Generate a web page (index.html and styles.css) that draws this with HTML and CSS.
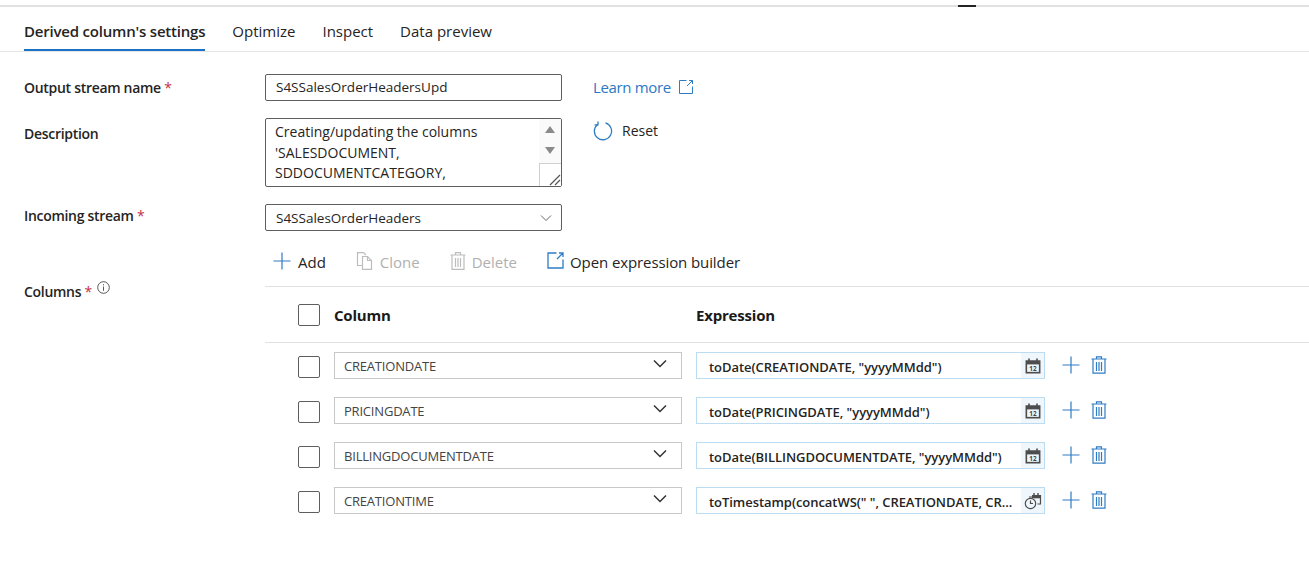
FILE: index.html
```html
<!DOCTYPE html>
<html lang="en">

<head>
    <meta charset="UTF-8">
    <meta name="viewport" content="width=device-width, initial-scale=1.0">
    <title>Derived column's settings</title>
    <link rel="stylesheet" href="styles.css">
</head>

<body>
    <div class="top-line"><span class="top-mark"></span></div>

    <div class="tabs">
        <span class="tab active">Derived column's settings</span>
        <span class="tab">Optimize</span>
        <span class="tab">Inspect</span>
        <span class="tab">Data preview</span>
    </div>

    <div class="form">
        <div class="field-row row-output">
            <label class="field-label">Output stream name <span class="req">*</span></label>
            <div class="text-box">S4SSalesOrderHeadersUpd</div>
            <a class="side-link">Learn more
                <svg class="ext-icon" width="16" height="16" viewBox="0 0 16 16" fill="none" stroke="#2f7cc4" stroke-width="1"><path d="M8.5 1.5H1.5V14.5H14.5V7.5"/><path d="M11 1.5H14.5V5M14.5 1.5L9 7"/></svg>
            </a>
        </div>

        <div class="field-row row-desc">
            <label class="field-label">Description</label>
            <div class="desc-box">
                <div class="desc-text">Creating/updating the columns<br>'SALESDOCUMENT,<br>SDDOCUMENTCATEGORY,</div>
                <div class="desc-scroll">
                    <span class="arrow-up"></span>
                    <span class="arrow-down"></span>
                    <span class="grip">
                        <svg width="12" height="12" viewBox="0 0 12 12" fill="none" stroke="#555" stroke-width="1.2"><path d="M1 11L11 1M6 11L11 6"/></svg>
                    </span>
                </div>
            </div>
            <div class="side-link reset">
                <svg width="20" height="20" viewBox="0 0 20 20" fill="none" stroke="#2f7cc4" stroke-width="1.3"><path d="M12.5 1.9A8.6 8.6 0 1 1 4.6 3.4"/><path d="M5 0.6V3.8H1.6"/></svg>
                <span>Reset</span>
            </div>
        </div>

        <div class="field-row row-incoming">
            <label class="field-label">Incoming stream <span class="req">*</span></label>
            <div class="text-box select-box">
                <span>S4SSalesOrderHeaders</span>
                <svg width="12" height="12" viewBox="0 0 12 12" fill="none" stroke="#666" stroke-width="1"><path d="M1 3.5L6 8.5L11 3.5"/></svg>
            </div>
        </div>

        <div class="columns-section">
            <label class="field-label columns-label">Columns <span class="req">*</span>
                <svg class="info-icon" width="13" height="13" viewBox="0 0 13 13" fill="none" stroke="#444" stroke-width="0.9"><circle cx="6.5" cy="6.5" r="5.8"/><path d="M6.5 5.6V9.8M6.5 3.2V4.4"/></svg>
            </label>

            <div class="columns-body">
                <div class="toolbar">
                    <span class="tool tool-add">
                        <svg width="18" height="18" viewBox="0 0 18 18" stroke="#2f7cc4" stroke-width="1.2"><path d="M9 0.5V17.5M0.5 9H17.5"/></svg>
                        Add
                    </span>
                    <span class="tool tool-clone disabled">
                        <svg width="17" height="18" viewBox="0 0 17 18" fill="none" stroke="#bdbdbd" stroke-width="1.2"><path d="M6.5 4.5H11.5L15.5 8.5V17.4H6.5Z"/><path d="M11.5 4.5V8.5H15.5"/><path d="M6.5 13.5H1.5V0.6H7.5L10 3"/></svg>
                        Clone
                    </span>
                    <span class="tool tool-delete disabled">
                        <svg width="16" height="18" viewBox="0 0 16 18" fill="none" stroke="#bdbdbd" stroke-width="1.2"><path d="M0.5 3H15.5M5.5 3V0.6H10.5V3M2 3V17.4H14V3M5.5 6V15M8 6V15M10.5 6V15"/></svg>
                        Delete
                    </span>
                    <span class="tool open-builder">
                        <svg width="17" height="17" viewBox="0 0 17 17" fill="none" stroke="#2f7cc4" stroke-width="1.3"><path d="M9.5 1H1V16H16V7.5"/><path d="M12 1H16V5M16 1L10 7"/></svg>
                        Open expression builder
                    </span>
                </div>

                <div class="table-head">
                    <span class="check"></span>
                    <span class="col-name">Column</span>
                    <span class="col-expr">Expression</span>
                </div>

                <div class="table-body">
                    <div class="table-row">
                        <span class="check"></span>
                        <div class="col-select"><span>CREATIONDATE</span><svg class="chevron" width="14" height="9" viewBox="0 0 14 9" fill="none" stroke="#333" stroke-width="1.5"><path d="M1 1.5L7 7.5L13 1.5"/></svg></div>
                        <div class="expr-box">
                            <span class="expr-text">toDate(CREATIONDATE, "yyyyMMdd")</span>
                            <span class="expr-icon"><svg class="cal" width="16" height="16" viewBox="0 0 15 15"><path fill="#4d4d4d" d="M0.5 2H3V0.5H4.5V2H10.5V0.5H12V2H14.5V14.5H0.5Z"/><rect x="2" y="6" width="11" height="7" fill="#eef5fb"/><text x="7.5" y="12" class="cal-num">12</text></svg></span>
                        </div>
                        <span class="row-actions">
                            <svg width="18" height="18" viewBox="0 0 18 18" stroke="#2f7cc4" stroke-width="1.2"><path d="M9 0.5V17.5M0.5 9H17.5"/></svg>
                            <svg width="16" height="18" viewBox="0 0 16 18" fill="none" stroke="#2f7cc4" stroke-width="1.2"><path d="M0.5 3H15.5M5.5 3V0.8H10.5V3M2 3V17.2H14V3M5.5 6V15M8 6V15M10.5 6V15"/></svg>
                        </span>
                    </div>
                    <div class="table-row">
                        <span class="check"></span>
                        <div class="col-select"><span>PRICINGDATE</span><svg class="chevron" width="14" height="9" viewBox="0 0 14 9" fill="none" stroke="#333" stroke-width="1.5"><path d="M1 1.5L7 7.5L13 1.5"/></svg></div>
                        <div class="expr-box">
                            <span class="expr-text">toDate(PRICINGDATE, "yyyyMMdd")</span>
                            <span class="expr-icon"><svg class="cal" width="16" height="16" viewBox="0 0 15 15"><path fill="#4d4d4d" d="M0.5 2H3V0.5H4.5V2H10.5V0.5H12V2H14.5V14.5H0.5Z"/><rect x="2" y="6" width="11" height="7" fill="#eef5fb"/><text x="7.5" y="12" class="cal-num">12</text></svg></span>
                        </div>
                        <span class="row-actions">
                            <svg width="18" height="18" viewBox="0 0 18 18" stroke="#2f7cc4" stroke-width="1.2"><path d="M9 0.5V17.5M0.5 9H17.5"/></svg>
                            <svg width="16" height="18" viewBox="0 0 16 18" fill="none" stroke="#2f7cc4" stroke-width="1.2"><path d="M0.5 3H15.5M5.5 3V0.8H10.5V3M2 3V17.2H14V3M5.5 6V15M8 6V15M10.5 6V15"/></svg>
                        </span>
                    </div>
                    <div class="table-row">
                        <span class="check"></span>
                        <div class="col-select"><span>BILLINGDOCUMENTDATE</span><svg class="chevron" width="14" height="9" viewBox="0 0 14 9" fill="none" stroke="#333" stroke-width="1.5"><path d="M1 1.5L7 7.5L13 1.5"/></svg></div>
                        <div class="expr-box">
                            <span class="expr-text">toDate(BILLINGDOCUMENTDATE, "yyyyMMdd")</span>
                            <span class="expr-icon"><svg class="cal" width="16" height="16" viewBox="0 0 15 15"><path fill="#4d4d4d" d="M0.5 2H3V0.5H4.5V2H10.5V0.5H12V2H14.5V14.5H0.5Z"/><rect x="2" y="6" width="11" height="7" fill="#eef5fb"/><text x="7.5" y="12" class="cal-num">12</text></svg></span>
                        </div>
                        <span class="row-actions">
                            <svg width="18" height="18" viewBox="0 0 18 18" stroke="#2f7cc4" stroke-width="1.2"><path d="M9 0.5V17.5M0.5 9H17.5"/></svg>
                            <svg width="16" height="18" viewBox="0 0 16 18" fill="none" stroke="#2f7cc4" stroke-width="1.2"><path d="M0.5 3H15.5M5.5 3V0.8H10.5V3M2 3V17.2H14V3M5.5 6V15M8 6V15M10.5 6V15"/></svg>
                        </span>
                    </div>
                    <div class="table-row">
                        <span class="check"></span>
                        <div class="col-select"><span>CREATIONTIME</span><svg class="chevron" width="14" height="9" viewBox="0 0 14 9" fill="none" stroke="#333" stroke-width="1.5"><path d="M1 1.5L7 7.5L13 1.5"/></svg></div>
                        <div class="expr-box">
                            <span class="expr-text">toTimestamp(concatWS(" ", CREATIONDATE, CR...</span>
                            <span class="expr-icon"><svg width="18" height="18" viewBox="0 0 18 18" fill="none" stroke="#4d4d4d" stroke-width="1.2"><path d="M8 3.5H16.5V12H13.5"/><path d="M8 5H16.5" stroke-width="2.6"/><path d="M10 1V3.5M14 1V3.5" stroke-width="1.4"/><circle cx="6.5" cy="11.5" r="5.2"/><path d="M6.5 8.5V11.5H9M5 5H8"/></svg></span>
                        </div>
                        <span class="row-actions">
                            <svg width="18" height="18" viewBox="0 0 18 18" stroke="#2f7cc4" stroke-width="1.2"><path d="M9 0.5V17.5M0.5 9H17.5"/></svg>
                            <svg width="16" height="18" viewBox="0 0 16 18" fill="none" stroke="#2f7cc4" stroke-width="1.2"><path d="M0.5 3H15.5M5.5 3V0.8H10.5V3M2 3V17.2H14V3M5.5 6V15M8 6V15M10.5 6V15"/></svg>
                        </span>
                    </div>
                </div>
            </div>
        </div>
    </div>
</body>

</html>
```

FILE: styles.css
```css
body {
    font-family: "Open Sans", "Noto Sans", sans-serif;
    font-size: 14px;
    color: #252423;
    background-color: #fff;
    margin: 0;
    overflow: hidden;
}

.top-line {
    position: relative;
    height: 2px;
    margin-top: 5px;
    background-color: #e1e1e1;
}

.top-mark {
    position: absolute;
    left: 958px;
    top: 0;
    width: 18px;
    height: 2px;
    background-color: #252423;
}

.tabs {
    display: flex;
    gap: 27px;
    height: 44px;
    padding-left: 24px;
    border-bottom: 1px solid #e6e6e6;
}

.tab {
    font-size: 15px;
    line-height: 48px;
    height: 42px;
    white-space: nowrap;
}

.tab.active {
    font-weight: 600;
    letter-spacing: -0.2px;
    border-bottom: 2px solid #1a73c7;
}

.form {
    padding-left: 24px;
}

.field-row {
    display: flex;
    align-items: flex-start;
}

.field-label {
    flex: 0 0 241px;
    font-weight: 600;
    font-size: 14px;
    letter-spacing: -0.3px;
    white-space: nowrap;
}

.req {
    color: #c4314b;
    font-weight: 400;
}

.row-output {
    margin-top: 22px;
}

.row-output .field-label {
    line-height: 27px;
}

.row-desc {
    margin-top: 17px;
}

.row-desc .field-label {
    line-height: 32px;
}

.row-incoming {
    margin-top: 17px;
}

.row-incoming .field-label {
    line-height: 24px;
}

.text-box {
    width: 297px;
    height: 27px;
    line-height: 24px;
    padding: 0 10px;
    box-sizing: border-box;
    border: 1px solid #605e5c;
    border-radius: 2px;
    font-size: 13.5px;
}

.select-box {
    display: flex;
    align-items: center;
    justify-content: space-between;
    padding-right: 9px;
}

.side-link {
    display: flex;
    align-items: center;
    gap: 7px;
    margin-left: 31px;
    height: 26px;
    color: #2b78c5;
    font-size: 15px;
    letter-spacing: -0.35px;
}

.reset {
    color: #252423;
    height: 25px;
    gap: 9px;
    margin-left: 31px;
    font-size: 14px;
    letter-spacing: 0;
}

.desc-box {
    display: flex;
    width: 297px;
    height: 69px;
    box-sizing: border-box;
    border: 1px solid #605e5c;
    border-radius: 2px;
    overflow: hidden;
}

.desc-text {
    flex: 1;
    padding: 3px 0 0 9px;
    font-size: 14px;
    line-height: 20.5px;
    white-space: nowrap;
}

.desc-scroll {
    display: flex;
    flex-direction: column;
    align-items: center;
    width: 22px;
    background-color: #fafafa;
}

.arrow-up,
.arrow-down {
    width: 0;
    height: 0;
    border-left: 5px solid transparent;
    border-right: 5px solid transparent;
}

.arrow-up {
    margin-top: 7px;
    border-bottom: 7px solid #8a8a8a;
}

.arrow-down {
    margin-top: 14px;
    border-top: 7px solid #8a8a8a;
}

.grip {
    display: flex;
    align-items: flex-end;
    justify-content: flex-end;
    width: 22px;
    height: 23px;
    margin-top: 9px;
    border-top: 1px solid #d0d0d0;
    border-left: 1px solid #d0d0d0;
    box-sizing: border-box;
    background-color: #fff;
}

.columns-section {
    display: flex;
    align-items: flex-start;
}

.columns-label {
    padding-top: 51px;
    line-height: 20px;
}

.info-icon {
    position: relative;
    top: -3px;
    margin-left: 2px;
}

.columns-body {
    flex: 1;
}

.toolbar {
    display: flex;
    align-items: center;
    height: 48px;
    padding: 7px 0 0 8px;
    border-bottom: 1px solid #e1e1e1;
    font-size: 15px;
}

.tool {
    display: flex;
    align-items: center;
    margin-right: 30px;
}

.tool svg {
    margin-top: -3px;
}

.tool-add {
    gap: 7px;
}

.tool-clone {
    gap: 7px;
}

.tool-delete {
    gap: 6px;
}

.tool.disabled {
    color: #b0b0b0;
}

.open-builder {
    gap: 6px;
    letter-spacing: -0.1px;
}

.table-head {
    display: flex;
    align-items: center;
    height: 55px;
    padding: 0 0 0 33px;
    border-bottom: 1px solid #e1e1e1;
    font-weight: 700;
    font-size: 15px;
    letter-spacing: -0.2px;
    color: #1b1a19;
}

.check {
    flex: none;
    width: 22px;
    height: 22px;
    box-sizing: border-box;
    border: 1px solid #605e5c;
    border-radius: 2px;
    background-color: #fff;
}

.col-name {
    width: 362px;
    margin-left: 14px;
}

.table-body {
    padding: 9px 0 0 33px;
}

.table-row {
    display: flex;
    align-items: center;
    height: 27px;
    margin-bottom: 18px;
}

.table-row .check {
    margin-top: 3px;
}

.col-select {
    display: flex;
    align-items: center;
    justify-content: space-between;
    width: 348px;
    height: 27px;
    margin-left: 14px;
    padding: 0 14px 0 9px;
    box-sizing: border-box;
    border: 1px solid #c8c8c8;
    font-size: 13px;
    letter-spacing: -0.2px;
    color: #444;
}

.chevron {
    margin-bottom: 4px;
}

.expr-box {
    display: flex;
    align-items: center;
    width: 349px;
    height: 27px;
    margin-left: 14px;
    box-sizing: border-box;
    border: 1px solid #bcdcf2;
}

.expr-text {
    flex: 1;
    min-width: 0;
    padding: 3px 0 0 12px;
    font-size: 13px;
    font-weight: 600;
    letter-spacing: -0.05px;
    white-space: nowrap;
}

.expr-icon {
    display: flex;
    align-items: center;
    justify-content: center;
    flex: none;
    width: 23px;
    height: 100%;
    background-color: #eff6fc;
}

.cal-num {
    font-size: 6px;
    font-weight: 700;
    text-anchor: middle;
    fill: #444;
}

.row-actions {
    display: flex;
    align-items: center;
    gap: 11px;
    margin-left: 17px;
    margin-top: -1px;
}
```
